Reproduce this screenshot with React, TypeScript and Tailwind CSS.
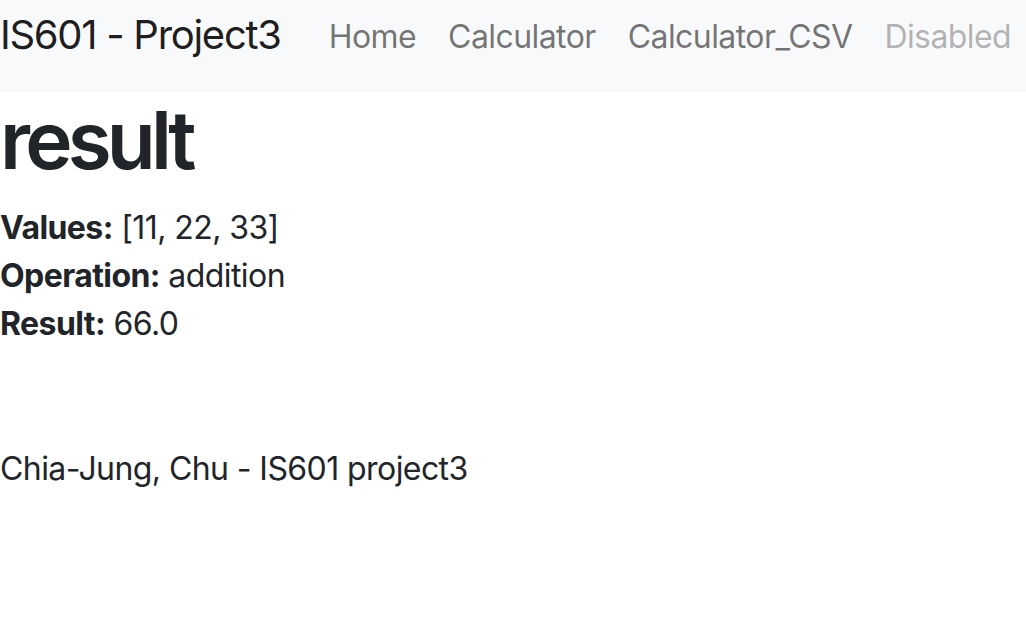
export default function App() {
  return (
    <div className="min-h-[636px] bg-white text-[#212529] text-[32px] leading-[1.5] tracking-[-0.018em]" style={{ fontFamily: 'Inter, "Noto Sans", sans-serif' }}>
      <nav className="bg-[#f8f9fa] h-[92px] flex items-start whitespace-nowrap">
        <span className="shrink-0 text-[40px] leading-[60px] pt-[5px] mr-[32px] tracking-[-0.032em] text-black/90">IS601 - Project3</span>
        <div className="flex shrink-0 pt-[13px]">
          <span className="px-[16px] leading-[48px] text-black/55">Home</span>
          <span className="px-[16px] leading-[48px] text-black/55">Calculator</span>
          <span className="px-[16px] leading-[48px] text-black/55">Calculator_CSV</span>
          <span className="px-[16px] leading-[48px] text-black/30">Disabled</span>
        </div>
      </nav>
      <main>
        <h1 className="text-[80px] leading-[1.2] font-semibold tracking-[-0.06em] mb-[16px]">result</h1>
        <div>
          <div><b className="font-bold">Values:</b> [11, 22, 33]</div>
          <div><b className="font-bold">Operation:</b> addition</div>
          <div><b className="font-bold">Result:</b> 66.0</div>
        </div>
        <footer className="mt-[97px]">Chia-Jung, Chu - IS601 project3</footer>
      </main>
    </div>
  );
}
